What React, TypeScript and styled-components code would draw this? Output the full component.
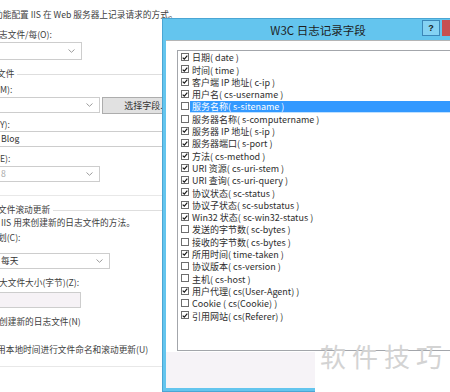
import React from "react";
import styled, { createGlobalStyle } from "styled-components";

const Global = createGlobalStyle`
  html, body { margin: 0; padding: 0; background: #fff; }
  body { width: 450px; height: 392px; overflow: hidden; }
  * { box-sizing: border-box; }
`;

const Page = styled.div`
  position: relative;
  width: 450px;
  height: 392px;
  overflow: hidden;
  background: #fff;
  font-family: "Noto Sans CJK SC", "Liberation Sans", sans-serif;
  font-size: 9px;
  color: #3a3a3a;
`;

const Left = styled.div`
  display: flex;
  flex-direction: column;
  padding-top: 9px;
  margin-left: -4px;
  width: 260px;
  font-size: 8.7px;
`;

const Text = styled.div<{ $mt?: number; $x?: number; $muted?: boolean }>`
  height: 12px;
  line-height: 12px;
  white-space: nowrap;
  margin-top: ${(p) => p.$mt ?? 0}px;
  margin-left: ${(p) => p.$x ?? 0}px;
  color: ${(p) => (p.$muted ? "#a0a0a0" : "#404040")};
`;

const Group = styled.div<{ $mt: number; $pb: number }>`
  display: flex;
  flex-direction: column;
  margin-top: ${(p) => p.$mt}px;
  padding-bottom: ${(p) => p.$pb}px;
  border-bottom: 1px solid #e8e8e8;
`;

const GroupHead = styled.div<{ $x?: number }>`
  display: flex;
  align-items: center;
  height: 12px;
  line-height: 12px;
  white-space: nowrap;
  color: #404040;
  margin-left: ${(p) => p.$x ?? 0}px;
  &::after {
    content: "";
    flex: 1;
    height: 1px;
    background: #dedede;
    margin-left: 3px;
  }
`;

const Field = styled.div<{ $w: number; $h?: number; $mt?: number; $disabled?: boolean; $bg?: string }>`
  display: flex;
  align-items: center;
  justify-content: space-between;
  width: ${(p) => p.$w}px;
  height: ${(p) => p.$h ?? 16}px;
  margin-top: ${(p) => p.$mt ?? 0}px;
  padding: 0 6px 0 4px;
  border: 1px solid #cdcdcd;
  background: ${(p) => p.$bg ?? "#fff"};
  color: ${(p) => (p.$disabled ? "#a8a8a8" : "#333")};
  white-space: nowrap;
  line-height: 12px;
`;

const FieldRow = styled.div<{ $mt?: number }>`
  display: flex;
  align-items: flex-start;
  gap: 2px;
  margin-top: ${(p) => p.$mt ?? 0}px;
`;

const Button = styled.div`
  width: 88px;
  height: 17px;
  border: 1px solid #adadad;
  background: #e1e1e1;
  display: flex;
  align-items: center;
  justify-content: center;
  color: #333;
  white-space: nowrap;
  font-size: 9px;
`;

const Chevron = () => (
  <svg width="7" height="4" viewBox="0 0 7 4">
    <path d="M0.5 0.5 L3.5 3.3 L6.5 0.5" fill="none" stroke="#9c9c9c" strokeWidth="1" />
  </svg>
);

const Dialog = styled.div`
  position: absolute;
  left: 162px;
  top: 18px;
  width: 312px;
  height: 374px;
  background: #64c5ee;
  border: 1px solid #4aa6d4;
  padding: 0 3px 3px 3px;
  display: flex;
  flex-direction: column;
`;

const TitleBar = styled.div`
  position: relative;
  height: 21px;
  display: flex;
  align-items: center;
  justify-content: center;
  font-size: 11.5px;
  color: #1e1e1e;
  white-space: nowrap;
`;

const TitleButtons = styled.div`
  position: absolute;
  right: 0;
  top: 1px;
  display: flex;
  gap: 2px;
`;

const HelpBtn = styled.div`
  width: 18px;
  height: 16px;
  background: #84d2f3;
  border: 1px solid #3b87b8;
  display: flex;
  align-items: center;
  justify-content: center;
  font-family: "Liberation Sans", sans-serif;
  font-weight: bold;
  font-size: 9px;
  color: #1a1a1a;
`;

const CloseBtn = styled.div`
  width: 28px;
  height: 16px;
  background: #c75050;
`;

const Body = styled.div`
  flex: 1;
  display: flex;
  flex-direction: column;
  border-top: 1px solid #b5b5b5;
  background: #fff;
`;

const ListWrap = styled.div`
  height: 311px;
  padding: 9px 0 0 11px;
  background: #fff;
`;

const List = styled.div`
  height: 301px;
  border: 1px solid #a3a6ab;
  border-right: none;
  background: #fff;
  display: flex;
  flex-direction: column;
  overflow: hidden;
`;

const Row = styled.div`
  height: 12.3px;
  flex: none;
  display: flex;
  align-items: center;
  padding-left: 3px;
`;

const Box = styled.div`
  width: 8px;
  height: 8px;
  border: 1px solid #6e6e6e;
  background: #fff;
  display: flex;
  align-items: center;
  justify-content: center;
  margin-right: 1px;
  flex: none;
`;

const Label = styled.div<{ $sel?: boolean }>`
  height: 11px;
  line-height: 11px;
  padding-left: 2px;
  white-space: nowrap;
  align-self: flex-end;
  flex: ${(p) => (p.$sel ? 1 : "none")};
  background: ${(p) => (p.$sel ? "#3399ff" : "transparent")};
  color: ${(p) => (p.$sel ? "#fff" : "#2e2e2e")};
  box-shadow: ${(p) => (p.$sel ? "0 1px 0 #bfe0ff" : "none")};
`;

const Footer = styled.div`
  flex: 1;
  background: #f6f3f7;
`;

const Watermark = styled.div`
  position: absolute;
  left: 315px;
  top: 351px;
  right: 0;
  bottom: 0;
  background: #fff;
`;

const WatermarkText = styled.div`
  position: absolute;
  left: 5px;
  top: -12px;
  font-size: 26px;
  line-height: 34px;
  letter-spacing: 6px;
  color: #d3d3d3;
  white-space: nowrap;
`;

const fields: [string, boolean][] = [
  ["日期( date )", true],
  ["时间( time )", true],
  ["客户端 IP 地址( c-ip )", true],
  ["用户名( cs-username )", true],
  ["服务名称( s-sitename )", false],
  ["服务器名称( s-computername )", false],
  ["服务器 IP 地址( s-ip )", true],
  ["服务器端口( s-port )", true],
  ["方法( cs-method )", true],
  ["URI 资源( cs-uri-stem )", true],
  ["URI 查询( cs-uri-query )", true],
  ["协议状态( sc-status )", true],
  ["协议子状态( sc-substatus )", true],
  ["Win32 状态( sc-win32-status )", true],
  ["发送的字节数( sc-bytes )", false],
  ["接收的字节数( cs-bytes )", false],
  ["所用时间( time-taken )", true],
  ["协议版本( cs-version )", false],
  ["主机( cs-host )", false],
  ["用户代理( cs(User-Agent) )", true],
  ["Cookie ( cs(Cookie) )", false],
  ["引用网站( cs(Referer) )", true],
];

const Check = () => (
  <svg width="7" height="7" viewBox="0 0 7 7">
    <path d="M0.8 3.6 L2.7 5.5 L6.2 1.2" fill="none" stroke="#1a1a1a" strokeWidth="1.4" />
  </svg>
);

export default function App() {
  return (
    <Page>
      <Global />
      <Left>
        <Text $x={-2}>功能配置 IIS 在 Web 服务器上记录请求的方式。</Text>
        <Text $mt={8} $x={3}>志文件/每(O):</Text>
        <Field $w={86} $h={18} $mt={1}>
          <span />
          <Chevron />
        </Field>
        <Group $mt={8} $pb={13}>
          <GroupHead $x={1}>文件</GroupHead>
          <Text $mt={4} $x={1}>(M):</Text>
          <FieldRow $mt={1}>
            <Field $w={104}>
              <span />
              <Chevron />
            </Field>
            <Button>选择字段...</Button>
          </FieldRow>
          <Text $mt={5} $x={1}>(Y):</Text>
          <Field $w={220} $mt={0}>
            <span>Blog</span>
          </Field>
          <Text $mt={6} $x={1}>(E):</Text>
          <Field $w={104} $mt={1} $disabled>
            <span>8</span>
            <Chevron />
          </Field>
        </Group>
        <Group $mt={8} $pb={10}>
          <GroupHead $x={2}>文件滚动更新</GroupHead>
          <Text $mt={1} $x={5}>IIS 用来创建新的日志文件的方法。</Text>
          <Text $mt={3} $x={2}>划(C):</Text>
          <Field $w={114} $mt={9}>
            <span>每天</span>
            <Chevron />
          </Field>
          <Text $mt={8} $x={3}>大文件大小(字节)(Z):</Text>
          <Field $w={85} $mt={3} $bg="#f6f2f6" />
          <Text $mt={8} $x={3}>创建新的日志文件(N)</Text>
          <Text $mt={16} $x={1}>用本地时间进行文件命名和滚动更新(U)</Text>
        </Group>
      </Left>

      <Dialog>
        <TitleBar>
          W3C 日志记录字段
          <TitleButtons>
            <HelpBtn>?</HelpBtn>
            <CloseBtn />
          </TitleButtons>
        </TitleBar>
        <Body>
          <ListWrap>
            <List>
              {fields.map(([name, checked], i) => (
                <Row key={name}>
                  <Box>{checked ? <Check /> : null}</Box>
                  <Label $sel={i === 4}>{name}</Label>
                </Row>
              ))}
            </List>
          </ListWrap>
          <Footer />
        </Body>
      </Dialog>

      <Watermark>
        <WatermarkText>软件技巧</WatermarkText>
      </Watermark>
    </Page>
  );
}
